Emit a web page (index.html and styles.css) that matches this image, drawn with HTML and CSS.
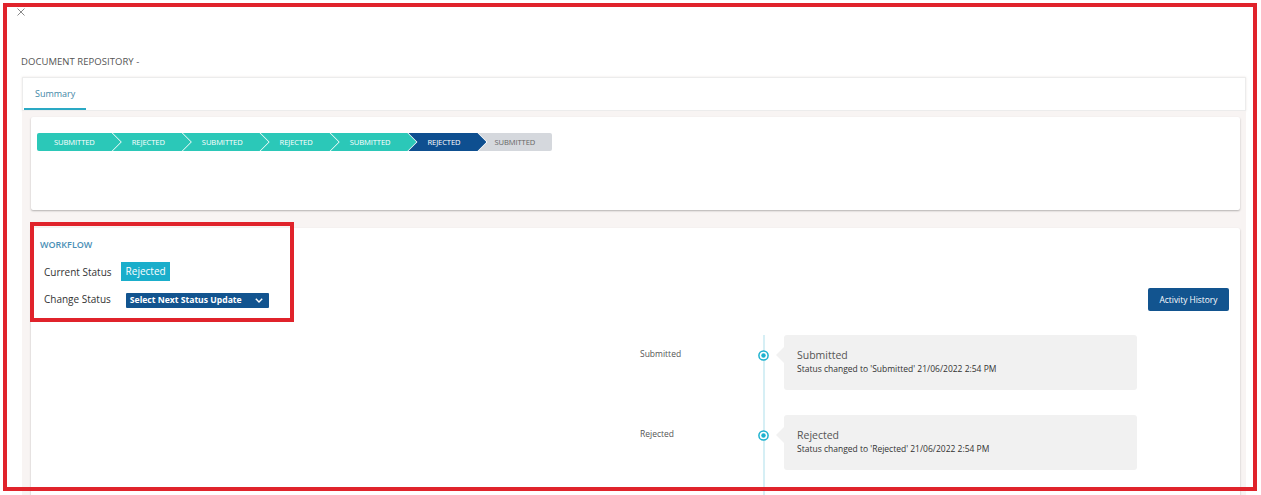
FILE: index.html
```html
<!DOCTYPE html>
<html lang="en">
<head>
<meta charset="utf-8">
<title>Document Repository</title>
<link rel="stylesheet" href="styles.css">
</head>
<body>
<div class="page">
  <div class="close-row">
    <svg class="close-icon" width="8" height="8" viewBox="0 0 8 8"><path d="M0.5 0.5 L7.5 7.5 M7.5 0.5 L0.5 7.5" stroke="#8a8a8a" stroke-width="1" fill="none"/></svg>
  </div>
  <div class="doc-title">DOCUMENT REPOSITORY -</div>
  <div class="tabs">
    <div class="tab active">Summary</div>
  </div>
  <div class="panel-area">
    <div class="card stepper-card">
      <div class="steps">
        <div class="step done first">SUBMITTED</div>
        <div class="step done">REJECTED</div>
        <div class="step done">SUBMITTED</div>
        <div class="step done">REJECTED</div>
        <div class="step done">SUBMITTED</div>
        <div class="step current">REJECTED</div>
        <div class="step todo last">SUBMITTED</div>
      </div>
    </div>
    <div class="card workflow-card">
      <div class="wf-head">
        <div class="wf-info">
          <div class="wf-title">WORKFLOW</div>
          <div class="wf-row">
            <span class="wf-label">Current Status</span>
            <span class="badge">Rejected</span>
          </div>
          <div class="wf-row change">
            <span class="wf-label">Change Status</span>
            <span class="select">Select Next Status Update
              <svg class="chev" width="8" height="5" viewBox="0 0 8 5"><path d="M0.8 0.8 L4 4 L7.2 0.8" stroke="#fff" stroke-width="1.4" fill="none"/></svg>
            </span>
          </div>
        </div>
        <button class="btn-history">Activity History</button>
      </div>
      <div class="timeline">
        <div class="tl-row">
          <div class="tl-label">Submitted</div>
          <div class="tl-dot"><svg width="11" height="11" viewBox="0 0 11 11"><circle cx="5.5" cy="5.5" r="4.6" fill="#fff" stroke="#1db2cf" stroke-width="1.5"/><circle cx="5.5" cy="5.5" r="2.2" fill="#1db2cf"/></svg></div>
          <div class="tl-card">
            <div class="tl-title">Submitted</div>
            <div class="tl-sub">Status changed to 'Submitted' 21/06/2022 2:54 PM</div>
          </div>
        </div>
        <div class="tl-row">
          <div class="tl-label">Rejected</div>
          <div class="tl-dot"><svg width="11" height="11" viewBox="0 0 11 11"><circle cx="5.5" cy="5.5" r="4.6" fill="#fff" stroke="#1db2cf" stroke-width="1.5"/><circle cx="5.5" cy="5.5" r="2.2" fill="#1db2cf"/></svg></div>
          <div class="tl-card">
            <div class="tl-title">Rejected</div>
            <div class="tl-sub">Status changed to 'Rejected' 21/06/2022 2:54 PM</div>
          </div>
        </div>
      </div>
    </div>
  </div>
</div>
<div class="annot annot-frame"></div>
<div class="annot annot-workflow"></div>
</body>
</html>
```
FILE: styles.css
```css
* { box-sizing: border-box; }
html, body { margin: 0; padding: 0; }
body {
  background: #fff;
  font-family: "Open Sans", "Noto Sans", sans-serif;
  color: #333;
  width: 1261px;
  height: 495px;
  overflow: hidden;
}
.page {
  padding: 0 15px 0 22px;
}
.close-row {
  height: 16px;
  padding-top: 8px;
  margin-left: -5px;
}
.close-icon { display: block; }
.doc-title {
  margin: 39px 0 0 -1px;
  font-size: 9.5px;
  line-height: 13px;
  color: #555;
  letter-spacing: 0.05px;
}
.tabs {
  margin-top: 9px;
  height: 34px;
  border: 1px solid #ececec;
  box-shadow: 0 0 2px rgba(200, 180, 175, 0.35);
  background: #fff;
  display: flex;
  align-items: stretch;
  padding-left: 1px;
}
.tab {
  padding: 0 11px;
  font-size: 9px;
  line-height: 32px;
  color: #3f87a6;
}
.tab.active {
  border-bottom: 2px solid #2aa9c4;
}
.panel-area {
  background: #f8f4f3;
  padding: 6px 6px 0 9px;
  height: 384px;
}
.card {
  background: #fff;
  border-radius: 2px;
  box-shadow: 0 1px 2px rgba(0, 0, 0, 0.28);
}
.stepper-card {
  height: 93px;
  padding: 16px 6px;
}
.steps {
  display: flex;
  height: 18px;
}
.step {
  height: 18px;
  line-height: 18px;
  font-size: 7.6px;
  color: #fff;
  padding: 0 26px 0 19px;
  margin-left: -8px;
  letter-spacing: -0.1px;
  clip-path: polygon(0 0, calc(100% - 9px) 0, 100% 50%, calc(100% - 9px) 100%, 0 100%, 9px 50%);
  white-space: nowrap;
}
.step.first {
  margin-left: 0;
  padding-left: 17px;
  border-radius: 2px 0 0 2px;
  clip-path: polygon(0 0, calc(100% - 9px) 0, 100% 50%, calc(100% - 9px) 100%, 0 100%);
}
.step.done { background: #2bc8b8; }
.step.current { background: #0e4f90; }
.step.todo { background: #d5d8dd; color: #666; }
.step.last {
  padding: 0 17px 0 16px;
  border-radius: 0 2px 2px 0;
  clip-path: polygon(0 0, 100% 0, 100% 100%, 0 100%, 9px 50%);
}
.workflow-card {
  margin-top: 18px;
  height: 267px;
  border-radius: 2px 2px 0 0;
  padding: 0 11px 0 9px;
}
.wf-head {
  display: flex;
  justify-content: space-between;
  align-items: flex-start;
}
.wf-info {
  padding-top: 11px;
}
.wf-title {
  font-size: 9px;
  font-weight: 600;
  line-height: 12px;
  color: #4a8fb6;
}
.wf-row {
  display: flex;
  align-items: center;
  margin-top: 11px;
  padding-left: 4px;
}
.wf-row.change {
  margin-top: 11px;
  align-items: flex-start;
}
.wf-label {
  font-size: 10px;
  line-height: 14px;
  color: #333;
}
.badge {
  margin-left: 9px;
  height: 19px;
  line-height: 19px;
  padding: 0 4px 0 5px;
  background: #1aaecb;
  color: #fff;
  font-size: 10px;
}
.select {
  margin: 1px 0 0 15px;
  width: 143px;
  height: 15px;
  background: #12548f;
  color: #fff;
  font-size: 8.6px;
  font-weight: 700;
  line-height: 15px;
  padding-left: 4px;
  border-radius: 1px;
  display: flex;
  align-items: center;
}
.chev { margin-left: 13px; }
.btn-history {
  margin-top: 60px;
  width: 81px;
  height: 23px;
  border: none;
  border-radius: 2px;
  background: #12548f;
  color: #fff;
  font-family: "Open Sans", "Noto Sans", sans-serif;
  font-size: 8.4px;
  padding: 0;
}
.timeline {
  position: relative;
  margin: 24px 0 0 600px;
  display: flex;
  flex-direction: column;
  gap: 25px;
}
.timeline::before {
  content: "";
  position: absolute;
  left: 123px;
  top: 0;
  height: 160px;
  width: 2px;
  background: #d6eff5;
}
.tl-row {
  display: flex;
  align-items: flex-start;
}
.tl-label {
  width: 118px;
  padding-top: 13px;
  font-size: 8.5px;
  line-height: 12px;
  color: #555;
}
.tl-dot {
  width: 12px;
  padding-top: 15px;
  position: relative;
  z-index: 1;
}
.tl-dot svg { display: block; }
.tl-card {
  position: relative;
  margin-left: 14px;
  width: 353px;
  height: 55px;
  background: #f1f1f1;
  border-radius: 3px;
  padding: 13px 0 0 13px;
}
.tl-card::before {
  content: "";
  position: absolute;
  left: -8px;
  top: 12px;
  border-top: 8px solid transparent;
  border-bottom: 8px solid transparent;
  border-right: 8px solid #f1f1f1;
}
.tl-title {
  font-size: 10.5px;
  line-height: 15px;
  color: #555;
}
.tl-sub {
  font-size: 8.5px;
  line-height: 12px;
  color: #333;
}
.annot {
  position: absolute;
  border: 4px solid #e0232b;
  pointer-events: none;
}
.annot-frame {
  left: 3px;
  top: 3px;
  width: 1254px;
  height: 488px;
}
.annot-workflow {
  left: 30px;
  top: 222px;
  width: 264px;
  height: 100px;
}
```
